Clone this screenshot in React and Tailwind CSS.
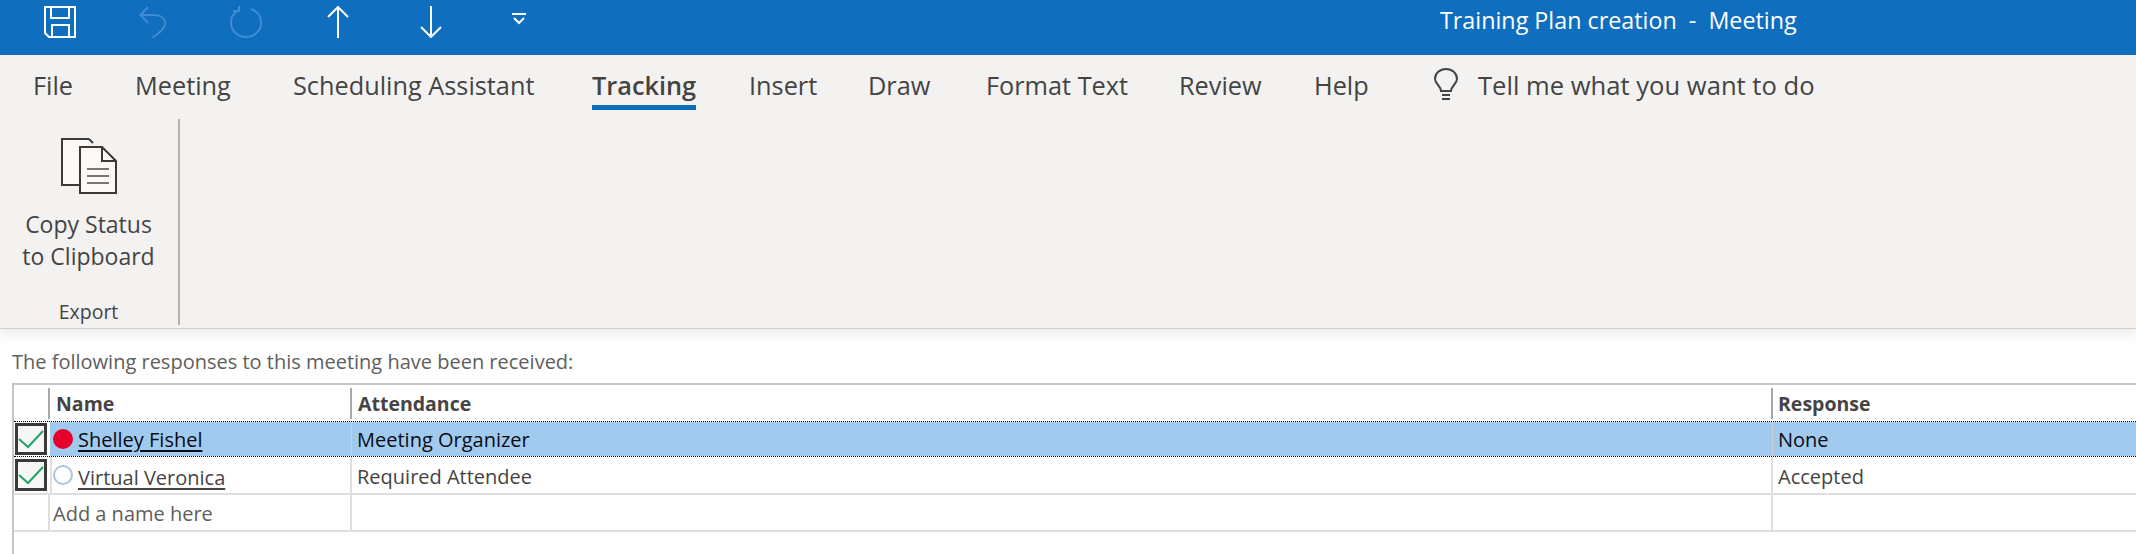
import React from "react";

const tabs = [
  { label: "File", cls: "w-[102px]" },
  { label: "Meeting", cls: "w-[158px]" },
  { label: "Scheduling Assistant", cls: "w-[299px]" },
  { label: "Tracking", cls: "w-[157px]", active: true },
  { label: "Insert", cls: "w-[119px]" },
  { label: "Draw", cls: "w-[118px]" },
  { label: "Format Text", cls: "w-[193px]" },
  { label: "Review", cls: "w-[135px]" },
  { label: "Help", cls: "w-[120px]" },
];

function TitleIcons() {
  return (
    <div className="flex items-start pl-[44px] pt-[6px]">
      <svg width="32" height="32" viewBox="0 0 32 32" fill="none" stroke="white" strokeWidth="2">
        <path d="M1 1H31V31H5L1 27Z" />
        <path d="M7 1V12H25V1" />
        <path d="M8 31V19H25V31" />
      </svg>
      <svg className="ml-[63px]" width="27" height="32" viewBox="0 0 27 32" fill="none" stroke="#3f8cd3" strokeWidth="2">
        <path d="M2 9H15C23 9 27 14 26 19C25 23 19 28 13 32" />
        <path d="M9 1L1.500 9L9 17" />
      </svg>
      <svg className="ml-[64px]" width="32" height="32" viewBox="0 0 32 32" fill="none" stroke="#3f8cd3" strokeWidth="2">
        <path d="M9 4C3 7 1 12 1 17C1 25 8 31 16 31C24 31 31 25 31 17C31 10 27 5 21 3" />
        <path d="M9 0V5H3" />
      </svg>
      <svg className="ml-[65px]" width="22" height="32" viewBox="0 0 22 32" fill="none" stroke="white" strokeWidth="2">
        <path d="M11 1V32" />
        <path d="M1 11L11 1L21 11" />
      </svg>
      <svg className="ml-[71px]" width="22" height="32" viewBox="0 0 22 32" fill="none" stroke="white" strokeWidth="2">
        <path d="M11 0V31" />
        <path d="M1 21L11 31L21 21" />
      </svg>
      <svg className="ml-[70px] mt-[7px]" width="14" height="12" viewBox="0 0 14 12" fill="none" stroke="white" strokeWidth="2">
        <path d="M0 1H14" />
        <path d="M2 5L7 10L12 5" />
      </svg>
    </div>
  );
}

function CopyIcon() {
  return (
    <svg width="56" height="56" viewBox="0 0 56 56" fill="none">
      <path d="M28 1H1V47H18" fill="#faf9f8" stroke="#3b3a39" strokeWidth="2" />
      <path d="M28 1L32 5" stroke="#3b3a39" strokeWidth="2" />
      <path d="M19 9H41L55 23V55H19Z" fill="#faf9f8" stroke="#3b3a39" strokeWidth="2" />
      <path d="M41 9V23H55" stroke="#3b3a39" strokeWidth="2" />
      <path d="M26 31H48M26 38H48M26 45H48" stroke="#797775" strokeWidth="2" />
    </svg>
  );
}

function BulbIcon() {
  return (
    <svg width="24" height="32" viewBox="0 0 24 32" fill="none" stroke="#444" strokeWidth="2">
      <path d="M7 23C7 18 1 16 1 11C1 5 6 1 12 1C18 1 23 5 23 11C23 16 17 18 17 23Z" />
      <path d="M8 27H16" />
      <path d="M8 31H16" />
    </svg>
  );
}

function Check() {
  return (
    <div className="w-[32px] h-[32px] border-[3px] border-[#3b3a39] bg-[#f7f7f7] flex items-center justify-center">
      <svg width="26" height="20" viewBox="0 0 26 20" fill="none" stroke="#21a366" strokeWidth="2">
        <path d="M1 10L10 18L25 2" />
      </svg>
    </div>
  );
}

function App() {
  return (
    <div className="w-[2136px] h-[554px] overflow-hidden bg-white font-['Open_Sans',sans-serif] text-[#444]">
      <div className="h-[55px] bg-[#106ebe] flex justify-between">
        <TitleIcons />
        <div className="w-[696px] pt-[3px] text-[23.300px] leading-[34px] text-white whitespace-pre">
          Training Plan creation  -  Meeting
        </div>
      </div>

      <div className="h-[274px] bg-[#f3f2f1] border-b border-[#d2d0ce] shadow-[0_6px_12px_rgba(0,0,0,0.08)] relative">
        <div className="h-[63px] pl-[33px] flex items-start pt-[13px] text-[25.300px] leading-[35px]">
          {tabs.map((tab) => (
            <div key={tab.label} className={`${tab.cls} shrink-0`}>
              <div className={`inline-block h-[42px] ${tab.active ? "font-semibold border-b-[5px] border-[#106ebe]" : ""}`}>
                {tab.label}
              </div>
            </div>
          ))}
          <BulbIcon />
          <div className="ml-[20px] text-[25.600px]">Tell me what you want to do</div>
        </div>

        <div className="flex h-[207px]">
          <div className="w-[178px] flex flex-col items-center text-[23px] leading-[32px] pr-[1px]">
            <div className="mt-[20px]">
              <CopyIcon />
            </div>
            <div className="mt-[14px] text-center">
              Copy Status
              <br />
              to Clipboard
            </div>
            <div className="mt-[24px] text-[19.500px] leading-[32px]">Export</div>
          </div>
          <div className="w-[2px] h-[206px] mt-[1px] bg-[#b3b0ad]"></div>
        </div>
      </div>

      <div className="pl-[12px] text-[20px]">
        <div className="h-[54px] flex items-center text-[#605e5c] pt-[12px]">The following responses to this meeting have been received:</div>

        <div className="border-t-2 border-l-2 border-[#c8c6c4]">
          <div className="h-[36px] flex font-bold items-center text-[19.500px]">
            <div className="w-[36px] shrink-0 h-[31px] border-r-2 border-[#a8a8a8]"></div>
            <div className="w-[302px] shrink-0 h-[31px] border-r-2 border-[#a8a8a8] pl-[6px] leading-[31px]">Name</div>
            <div className="w-[1421px] shrink-0 h-[31px] border-r-2 border-[#a8a8a8] pl-[6px] leading-[31px]">Attendance</div>
            <div className="pl-[5px] leading-[31px]">Response</div>
          </div>

          <div className="h-[36px] flex items-center border-y border-dotted border-black">
            <div className="w-[36px] shrink-0 pl-[1px]">
              <Check />
            </div>
            <div className="flex-1 h-full flex items-center bg-[#a0cbef] text-[#0a0a14]">
              <div className="w-[302px] shrink-0 h-full flex items-center pl-[3px] border-r border-[#d2d0ce]">
                <span className="w-[20px] h-[20px] rounded-full bg-[#e8002d]"></span>
                <span className="ml-[5px] mt-[2px] underline underline-offset-3">Shelley Fishel</span>
              </div>
              <div className="w-[1421px] shrink-0 h-full flex items-center pl-[5px] border-r border-[#d2d0ce] pt-[2px]">Meeting Organizer</div>
              <div className="pl-[5px] pt-[2px]">None</div>
            </div>
          </div>

          <div className="h-[38px] flex items-center border-b-2 border-[#e1dfdd]">
            <div className="w-[36px] shrink-0 pl-[1px]">
              <Check />
            </div>
            <div className="w-[302px] shrink-0 h-full flex items-center pl-[1px] border-x-2 border-[#e1dfdd]">
              <span className="w-[20px] h-[20px] rounded-full border-2 border-[#a9c6d8]"></span>
              <span className="ml-[5px] mt-[6px] underline underline-offset-3">Virtual Veronica</span>
            </div>
            <div className="w-[1421px] shrink-0 h-full flex items-center pl-[5px] pt-[3px] border-r-2 border-[#e1dfdd]">Required Attendee</div>
            <div className="pl-[5px] pt-[3px]">Accepted</div>
          </div>

          <div className="h-[37px] flex items-center border-b-2 border-[#e1dfdd] text-[#605e5c]">
            <div className="w-[36px] shrink-0 h-full border-r-2 border-[#e1dfdd]"></div>
            <div className="w-[302px] shrink-0 h-full flex items-center pl-[3px] pt-[3px] border-r-2 border-[#e1dfdd]">Add a name here</div>
            <div className="w-[1421px] shrink-0 h-full border-r-2 border-[#e1dfdd]"></div>
          </div>

          <div className="h-[30px]"></div>
        </div>
      </div>
    </div>
  );
}

export default App;
